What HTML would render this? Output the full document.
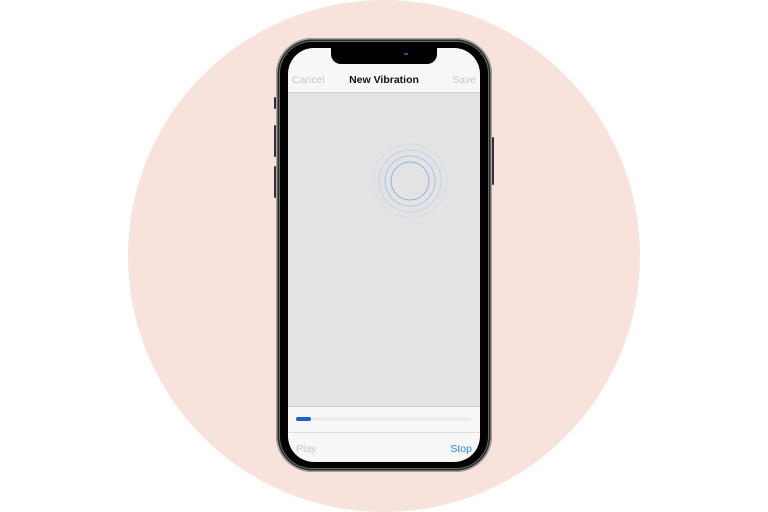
<!DOCTYPE html>
<html><head><style>
body{margin:0;width:768px;height:512px;background:#fff;position:relative;overflow:hidden;font-family:"Liberation Sans",sans-serif}
.bg{position:absolute;left:128px;top:0;width:512px;height:512px;border-radius:50%;background:#f7e2dc}
.phone{position:absolute;left:276px;top:38px;width:216px;height:434px;border-radius:36px;background:#2a2a2a;box-shadow:0 0 0 1.5px #a0a0a0 inset}
.phone:before{content:"";position:absolute;left:3px;top:3px;right:3px;bottom:3px;border-radius:33px;background:#000;border:1px solid #666}
.btn{position:absolute;background:#333;width:2px;border-radius:1px}
.screen{position:absolute;left:288px;top:48px;width:192px;height:414px;border-radius:26px;background:#f7f7f7;overflow:hidden}
.notch{position:absolute;left:43px;top:0;width:106px;height:16px;background:#000;border-radius:0 0 10px 10px}
.nav{position:absolute;top:26px;left:0;right:0;height:20px;font-size:10.5px}
.gray{position:absolute;top:44px;left:0;right:0;height:313px;background:#e3e3e3;border-top:1px solid #d0d0d0;border-bottom:1px solid #d0d0d0}
</style></head><body>
<div class="bg"></div>
<div class="btn" style="left:274px;top:97px;height:12px"></div>
<div class="btn" style="left:274px;top:125px;height:32px"></div>
<div class="btn" style="left:274px;top:166px;height:32px"></div>
<div class="btn" style="left:492px;top:137px;height:48px"></div>
<div class="phone"></div>
<div class="screen">
<div class="notch"><div style="position:absolute;left:73px;top:5px;width:4px;height:2px;background:#2a4a8a"></div></div>
<div class="nav"><span style="position:absolute;left:4px;color:#c8c8c8">Cancel</span><span style="position:absolute;left:0;right:0;text-align:center;font-weight:bold;color:#111">New Vibration</span><span style="position:absolute;right:4px;color:#c8c8c8">Save</span></div>
<div class="gray">
<svg width="192" height="313" style="position:absolute;left:0;top:0">
<g fill="none" stroke="#a9c3e8" stroke-width="1"><circle cx="122" cy="88" r="19" stroke="#8fb2e3"/><circle cx="122" cy="88" r="25"/><circle cx="122" cy="88" r="31" stroke="#c2d3ea"/><circle cx="122" cy="88" r="37" stroke="#d6dde8"/></g>
</svg></div>
<div style="position:absolute;left:8px;top:369px;width:176px;height:4px;background:#ececec;border-radius:2px"><div style="width:15px;height:4px;background:#1b62c8;border-radius:2px"></div></div>
<div style="position:absolute;left:0;right:0;top:384px;border-top:1px solid #dcdcdc"></div>
<span style="position:absolute;left:8px;top:395px;font-size:10.5px;color:#c8c8c8">Play</span>
<span style="position:absolute;right:8px;top:395px;font-size:10.5px;color:#2d8cf0">Stop</span>
</div>
</body></html>
